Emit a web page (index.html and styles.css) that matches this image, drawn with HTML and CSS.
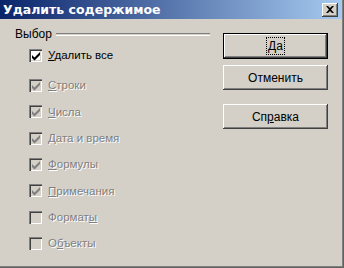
FILE: index.html
```html
<!DOCTYPE html>
<html lang="ru">
<head>
    <meta charset="UTF-8">
    <title>Удалить содержимое</title>
    <link rel="stylesheet" href="styles.css">
</head>
<body>
    <div class="window">
        <!-- заголовок окна -->
        <div class="titlebar">
            <span class="title">Удалить содержимое</span>
            <span class="close">
                <svg width="8" height="7" viewBox="0 0 8 7"><path d="M0 0h2l2 2 2-2h2L5 3.5 8 7H6L4 5 2 7H0l3-3.5z" fill="#000"/></svg>
            </span>
        </div>

        <div class="main">
            <!-- группа "Выбор" -->
            <div class="group">
                <div class="legend"><span>Выбор</span><i></i></div>

                <label class="option first">
                    <span class="box"><svg class="check" viewBox="0 0 8 8"><path d="M0 3l2.5 2.5L8 0v3L2.5 8.5 0 6z" fill="#000"/></svg></span>
                    <span class="text"><u>У</u>далить все</span>
                </label>
                <label class="option disabled">
                    <span class="box"><svg class="check" viewBox="0 0 8 8"><path d="M0 3l2.5 2.5L8 0v3L2.5 8.5 0 6z" fill="#808080"/></svg></span>
                    <span class="text"><u>С</u>троки</span>
                </label>
                <label class="option disabled">
                    <span class="box"><svg class="check" viewBox="0 0 8 8"><path d="M0 3l2.5 2.5L8 0v3L2.5 8.5 0 6z" fill="#808080"/></svg></span>
                    <span class="text"><u>Ч</u>исла</span>
                </label>
                <label class="option disabled">
                    <span class="box"><svg class="check" viewBox="0 0 8 8"><path d="M0 3l2.5 2.5L8 0v3L2.5 8.5 0 6z" fill="#808080"/></svg></span>
                    <span class="text"><u>Д</u>ата и время</span>
                </label>
                <label class="option disabled">
                    <span class="box"><svg class="check" viewBox="0 0 8 8"><path d="M0 3l2.5 2.5L8 0v3L2.5 8.5 0 6z" fill="#808080"/></svg></span>
                    <span class="text"><u>Ф</u>ормулы</span>
                </label>
                <label class="option disabled">
                    <span class="box"><svg class="check" viewBox="0 0 8 8"><path d="M0 3l2.5 2.5L8 0v3L2.5 8.5 0 6z" fill="#808080"/></svg></span>
                    <span class="text"><u>П</u>римечания</span>
                </label>
                <label class="option disabled">
                    <span class="box"></span>
                    <span class="text">Формат<u>ы</u></span>
                </label>
                <label class="option disabled">
                    <span class="box"></span>
                    <span class="text">О<u>б</u>ъекты</span>
                </label>
            </div>

            <!-- кнопки -->
            <div class="buttons">
                <button class="btn default"><span class="focus">Да</span></button>
                <button class="btn">Отменить</button>
                <button class="btn help">Сп<u>р</u>авка</button>
            </div>
        </div>
    </div>
</body>
</html>
```

FILE: styles.css
```css
body {
    margin: 0;
    font-family: "Liberation Sans", Arial, sans-serif;
    font-size: 11.5px;
    color: #000;
    background-color: #d4d0c8;
}

.window {
    width: 344px;
    height: 268px;
    box-sizing: border-box;
    background-color: #d4d0c8;
    box-shadow: inset -1px -1px #606060, inset -2px -2px #808080;
    padding: 0 2px 2px 0;
}

.titlebar {
    display: flex;
    align-items: center;
    justify-content: space-between;
    height: 19px;
    padding: 0 4px 0 3px;
    background: linear-gradient(90deg, #0a246a, #a6caf0);
    color: white;
    font-family: "DejaVu Sans", sans-serif;
    font-weight: bold;
    font-size: 12.5px;
}

.close {
    display: flex;
    align-items: center;
    justify-content: center;
    width: 16px;
    height: 14px;
    box-sizing: border-box;
    background-color: #d4d0c8;
    box-shadow: inset -1px -1px #404040, inset 1px 1px #fff, inset -2px -2px #808080;
}

.main {
    display: flex;
    gap: 13px;
    padding: 8px 0 0 15px;
}

.group {
    width: 195px;
}

.legend {
    display: flex;
    align-items: center;
    gap: 4px;
    height: 14px;
    font-size: 12px;
}

.legend i {
    flex: 1;
    height: 1px;
    border-top: 1px solid #808080;
    border-bottom: 1px solid #fff;
}

.option {
    display: flex;
    align-items: center;
    gap: 6px;
    height: 26.33px;
    padding-left: 14px;
}

.option.first {
    margin: 1px 0 4px;
}

.box {
    display: flex;
    align-items: center;
    justify-content: center;
    width: 13px;
    height: 13px;
    box-sizing: border-box;
    background-color: white;
    box-shadow: inset 1px 1px #808080, inset 2px 2px #404040, inset -1px -1px #fff, inset -2px -2px #d4d0c8;
}

.check {
    width: 8px;
    height: 8px;
    margin: 1px 0 0 1px;
    overflow: visible;
}

.disabled .box {
    background-color: #d4d0c8;
}

.disabled .text {
    color: #808080;
    text-shadow: 1px 1px 0 #fff;
}

.buttons {
    display: flex;
    flex-direction: column;
    width: 105px;
    margin-top: 6px;
}

.btn {
    height: 25px;
    margin-bottom: 6px;
    padding: 0;
    border: none;
    background-color: #d4d0c8;
    font-family: "Liberation Sans", Arial, sans-serif;
    font-size: 12px;
    color: #000;
    box-shadow: inset -1px -1px #404040, inset 1px 1px #fff, inset -2px -2px #808080;
}

.btn.default {
    height: 26px;
    border: 1px solid #000;
}

.btn.help {
    margin-top: 8px;
}

.focus {
    padding: 1px;
    outline: 1px dotted #000;
}
```
